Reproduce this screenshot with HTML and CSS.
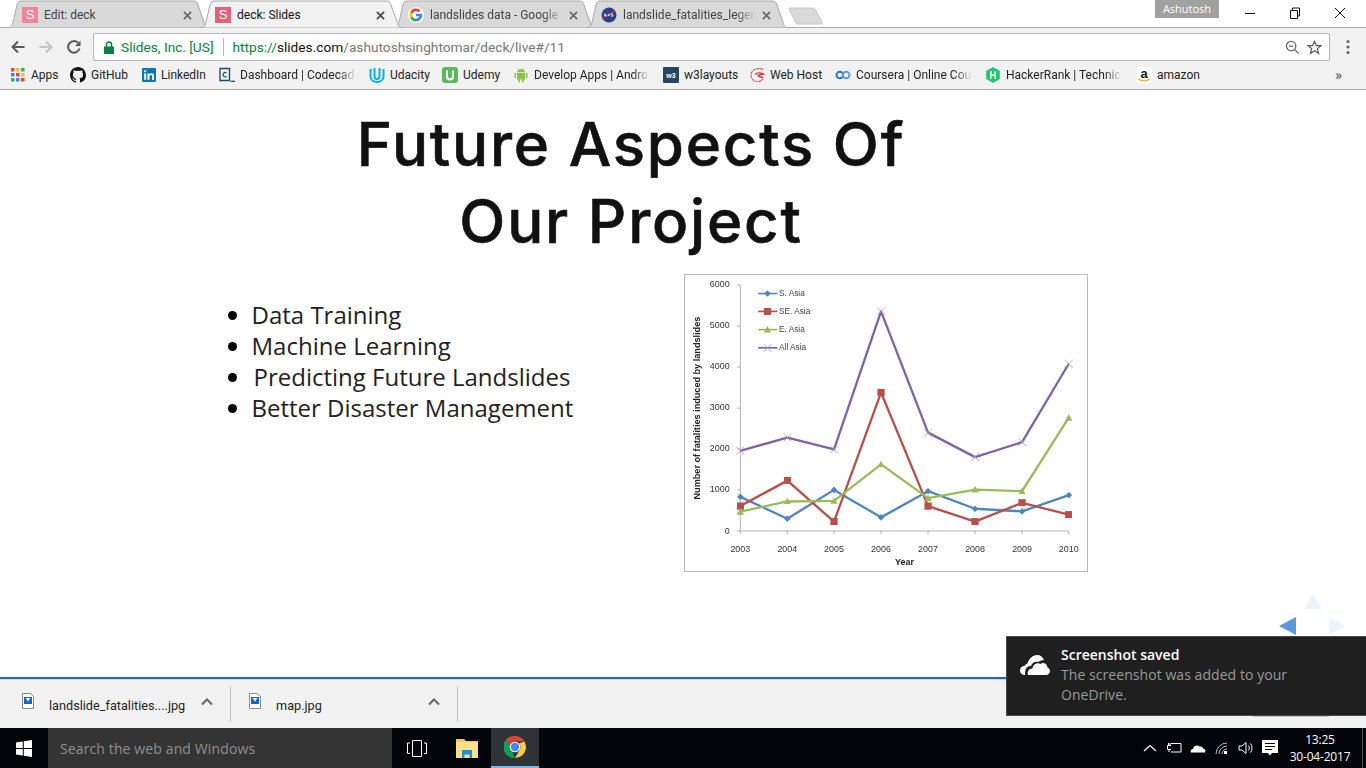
FILE: index.html
```html
<!DOCTYPE html>
<html lang="en">
<head>
<meta charset="utf-8">
<title>deck: Slides</title>
<link rel="stylesheet" href="styles.css">
</head>
<body>
<div class="browser">
  <header class="tabstrip">
    <div class="tab">
      <svg class="tab-shape" viewBox="0 0 203 28" preserveAspectRatio="none"><path d="M0 28C4 28 5 26 6 22L10 5C11 2 12 1 15 1H186C189 1 190 2 191 5L197 22C198 26 199 28 203 28Z"/></svg>
      <span class="fav fav-s fav-s-dim">S</span><span class="tab-title">Edit: deck</span>
      <svg class="tab-x" viewBox="0 0 10 10"><path d="M1 1L9 9M9 1L1 9"/></svg>
    </div>
    <div class="tab tab-active">
      <svg class="tab-shape" viewBox="0 0 203 28" preserveAspectRatio="none"><path d="M0 28C4 28 5 26 6 22L10 5C11 2 12 1 15 1H186C189 1 190 2 191 5L197 22C198 26 199 28 203 28Z"/></svg>
      <span class="fav fav-s">S</span><span class="tab-title">deck: Slides</span>
      <svg class="tab-x" viewBox="0 0 10 10"><path d="M1 1L9 9M9 1L1 9"/></svg>
    </div>
    <div class="tab">
      <svg class="tab-shape" viewBox="0 0 203 28" preserveAspectRatio="none"><path d="M0 28C4 28 5 26 6 22L10 5C11 2 12 1 15 1H186C189 1 190 2 191 5L197 22C198 26 199 28 203 28Z"/></svg>
      <svg class="fav" viewBox="0 0 16 16"><circle cx="8" cy="8" r="8" fill="#fff"/><path d="M13.8 6.7H8v2.6h3.4A3.6 3.6 0 0 1 8 11.8V14.4A6.3 6.3 0 0 0 14.300 8C14.300 7.500 14 7.100 13.800 6.700Z" fill="#4285f4"/><path d="M8 11.800A3.800 3.800 0 0 1 4.400 9.300L2.200 11A6.400 6.400 0 0 0 8 14.400Z" fill="#34a853"/><path d="M4.400 9.300A3.800 3.800 0 0 1 4.400 6.700L2.200 5A6.400 6.400 0 0 0 2.200 11Z" fill="#fbbc05"/><path d="M4.400 6.700A3.800 3.800 0 0 1 10.500 5.200L12.400 3.400A6.400 6.400 0 0 0 2.200 5Z" fill="#ea4335"/></svg>
      <span class="tab-title tab-fade">landslides data - Google</span>
      <svg class="tab-x" viewBox="0 0 10 10"><path d="M1 1L9 9M9 1L1 9"/></svg>
    </div>
    <div class="tab">
      <svg class="tab-shape" viewBox="0 0 203 28" preserveAspectRatio="none"><path d="M0 28C4 28 5 26 6 22L10 5C11 2 12 1 15 1H186C189 1 190 2 191 5L197 22C198 26 199 28 203 28Z"/></svg>
      <svg class="fav" viewBox="0 0 16 16"><circle cx="8" cy="8" r="7.500" fill="#2b3f8c"/><path d="M1.500 11C6 9.500 10 7 14 3.500" stroke="#d33" stroke-width="1.200" fill="none"/><path d="M3.500 9.200V6.800L5 9.200V6.800M7 9.200L8 6.800 9 9.200M10.200 9.200H12V8H10.500V6.800H12" stroke="#fff" stroke-width=".7" fill="none"/></svg>
      <span class="tab-title tab-fade">landslide_fatalities_legen</span>
      <svg class="tab-x" viewBox="0 0 10 10"><path d="M1 1L9 9M9 1L1 9"/></svg>
    </div>
    <svg class="newtab" viewBox="0 0 34 18"><path d="M1 1H24C25 1 26 2 26.500 3L33 15C33.500 16 33 17 32 17H9C8 17 7.500 16.500 7 15.500L.5 3C0 2 0 1 1 1Z"/></svg>
    <div class="profile">Ashutosh</div>
    <div class="winbtns">
      <svg class="winbtn" viewBox="0 0 12 12"><path d="M1 6.500H11"/></svg>
      <svg class="winbtn" viewBox="0 0 12 12"><path d="M1.500 3.500H8.500V11.500H1.500ZM3.500 3.500V1H10.500V9H8.500"/></svg>
      <svg class="winbtn" viewBox="0 0 12 12"><path d="M1 1L11 11M11 1L1 11"/></svg>
    </div>
  </header>

  <nav class="toolbar">
    <svg class="nav-ic" viewBox="0 0 16 16"><path class="ic-dark" d="M14.500 8H2.500M8 2.500L2.500 8 8 13.500"/></svg>
    <svg class="nav-ic" viewBox="0 0 16 16"><path class="ic-light" d="M1.500 8H13.500M8 2.500L13.500 8 8 13.500"/></svg>
    <svg class="nav-ic" viewBox="0 0 16 16"><path class="ic-dark" d="M13.500 9.500A5.800 5.800 0 1 1 12 3.800"/><path class="ic-fill" d="M14.500 1.500V7H9Z"/></svg>
    <div class="omnibox">
      <svg class="lock" viewBox="0 0 10 13"><path d="M0 5.500H10V13H0Z" fill="#0b8043"/><path d="M2.500 6V3.500A2.500 2.500 0 0 1 7.500 3.500V6" fill="none" stroke="#0b8043" stroke-width="1.500"/></svg>
      <span class="ev">Slides, Inc. [US]</span>
      <span class="omni-sep"></span>
      <span class="url"><span class="url-scheme">https://</span><span class="url-host">slides.com</span>/ashutoshsinghtomar/deck/live#/11</span>
      <svg class="omni-ic" viewBox="0 0 16 16"><circle cx="6.500" cy="6.500" r="5" fill="none" stroke="#666" stroke-width="1.400"/><path d="M4.200 6.500H8.800M10.200 10.200L14.500 14.500" stroke="#666" stroke-width="1.400" fill="none"/></svg>
      <svg class="omni-ic" viewBox="0 0 16 16"><path d="M8 1.500L10 6H14.800L11 9.200 12.300 14.300 8 11.500 3.700 14.300 5 9.200 1.200 6H6Z" fill="none" stroke="#555" stroke-width="1.300"/></svg>
    </div>
    <svg class="menu-ic" viewBox="0 0 4 16"><circle cx="2" cy="2.500" r="1.600"/><circle cx="2" cy="8" r="1.600"/><circle cx="2" cy="13.500" r="1.600"/></svg>
  </nav>

  <nav class="bookmarks">
    <a class="bm bm-apps"><svg class="bm-ic bm-ic-apps" viewBox="0 0 14 14"><rect width="3.500" height="3.500" fill="#e8453c"/><rect x="5" width="3.500" height="3.500" fill="#f9bb2d"/><rect x="10" width="3.500" height="3.500" fill="#3bab5a"/><rect y="5" width="3.500" height="3.500" fill="#4285f4"/><rect x="5" y="5" width="3.500" height="3.500" fill="#e8453c"/><rect x="10" y="5" width="3.500" height="3.500" fill="#f9bb2d"/><rect y="10" width="3.500" height="3.500" fill="#3bab5a"/><rect x="5" y="10" width="3.500" height="3.500" fill="#4285f4"/><rect x="10" y="10" width="3.500" height="3.500" fill="#e8453c"/></svg><span>Apps</span></a>
    <a class="bm bm-github"><svg class="bm-ic" viewBox="0 0 16 16"><path fill="#111" d="M8 0C3.600 0 0 3.600 0 8c0 3.500 2.300 6.500 5.500 7.600.4.100.5-.2.500-.4v-1.400c-2.200.5-2.700-1-2.700-1-.4-.9-.9-1.200-.9-1.200-.7-.5.100-.5.100-.5.800.1 1.200.8 1.200.8.700 1.200 1.900.9 2.300.7.100-.5.300-.9.500-1.100-1.800-.2-3.600-.9-3.600-4 0-.9.300-1.600.8-2.100-.1-.2-.4-1 .1-2.100 0 0 .7-.2 2.200.8.600-.2 1.300-.3 2-.3s1.400.1 2 .3c1.500-1 2.200-.8 2.200-.8.400 1.100.2 1.900.1 2.100.5.600.8 1.300.8 2.100 0 3.100-1.900 3.700-3.700 3.900.3.300.6.800.6 1.500v2.200c0 .2.100.5.600.4A8 8 0 0 0 16 8c0-4.400-3.600-8-8-8Z"/></svg><span>GitHub</span></a>
    <a class="bm bm-linkedin"><svg class="bm-ic bm-ic-14" viewBox="0 0 14 14"><rect width="14" height="14" rx="1" fill="#0b78b5"/><path d="M2.200 5.500H4.200V11.800H2.200ZM2.200 2.300H4.200V4.300H2.200ZM5.500 5.500H7.400V6.500C8 5.600 8.800 5.300 9.600 5.300 11.200 5.300 12 6.300 12 8V11.800H10V8.400C10 7.500 9.700 7 9 7 8.100 7 7.500 7.600 7.500 8.600V11.800H5.500Z" fill="#fff"/></svg><span>LinkedIn</span></a>
    <a class="bm bm-trunc"><svg class="bm-ic" viewBox="0 0 16 16"><path d="M1 1.500H10.500V13.500H1Z" fill="#eef1f4" stroke="#204b6b" stroke-width="1.400"/><path d="M7.500 5.800A2.200 2.200 0 1 0 7.500 9.500" fill="none" stroke="#204b6b" stroke-width="1.200"/><path d="M11.500 14.300H16" stroke="#204b6b" stroke-width="1.300"/></svg><span class="fade">Dashboard | Codecad</span></a>
    <a class="bm bm-udacity"><svg class="bm-ic" viewBox="0 0 16 16"><path d="M1.500 2V9.500C1.500 13 4.500 15 8 15S14.500 13 14.500 9.500V2" fill="none" stroke="#02b3e4" stroke-width="2"/><path d="M5.500 1V9.500C5.500 11.500 6.500 12 8 12S10.500 11.500 10.500 9.500V1" fill="none" stroke="#02b3e4" stroke-width="2"/></svg><span>Udacity</span></a>
    <a class="bm bm-udemy"><svg class="bm-ic" viewBox="0 0 16 16"><rect width="16" height="16" rx="3" fill="#5cb85c"/><path d="M5 3.500V9.500C5 11.500 6 12.500 8 12.500S11 11.500 11 9.500V3.500" fill="none" stroke="#fff" stroke-width="2"/></svg><span>Udemy</span></a>
    <a class="bm bm-trunc"><svg class="bm-ic" viewBox="0 0 16 16"><path fill="#8bc34a" d="M4 6H12V12.500H10.500V15.500H9V12.500H7V15.500H5.500V12.500H4ZM1.500 6H3V11H1.500ZM13 6H14.500V11H13ZM4 5.300C4 3.500 5.800 2 8 2S12 3.500 12 5.300Z"/><path d="M5.500 2.500L4.500.8M10.500 2.500L11.500.8" stroke="#8bc34a" stroke-width=".7"/></svg><span class="fade">Develop Apps | Andro</span></a>
    <a class="bm bm-w3"><svg class="bm-ic" viewBox="0 0 16 16"><rect width="16" height="16" rx="1" fill="#2a4560"/><text x="8" y="11" class="w3-text">w3</text></svg><span>w3layouts</span></a>
    <a class="bm bm-webhost"><svg class="bm-ic" viewBox="0 0 16 16"><path d="M14 2.500C10 .5 4 1.500 2.500 6S3.500 14 7.500 14.500C10.500 15 13 13.500 14 11.500" fill="none" stroke="#e3554f" stroke-width="1.200" stroke-dasharray="3 .8"/><path d="M6 7.500C8 5.500 11 5.500 14.500 7L9 8.500C10 10 12 10.500 14 10" fill="none" stroke="#d82c25" stroke-width="1.300"/></svg><span>Web Host</span></a>
    <a class="bm bm-trunc"><svg class="bm-ic" viewBox="0 0 16 16"><circle cx="4.800" cy="8" r="3.300" fill="none" stroke="#2a73cc" stroke-width="2"/><circle cx="11.200" cy="8" r="3.300" fill="none" stroke="#5e9be0" stroke-width="2"/></svg><span class="fade">Coursera | Online Cou</span></a>
    <a class="bm bm-trunc bm-hacker"><svg class="bm-ic" viewBox="0 0 16 16"><path d="M8 0L14.800 4V12L8 16 1.200 12V4Z" fill="#1ec96c"/><path d="M5.800 4V12M10.200 4V12M5.800 8H10.200" stroke="#fff" stroke-width="1.500"/></svg><span class="fade">HackerRank | Technica</span></a>
    <a class="bm bm-amazon"><svg class="bm-ic" viewBox="0 0 16 16"><rect width="16" height="16" fill="#fff"/><text x="8" y="11" class="amz-text">a</text><path d="M2.500 12C6 14.500 10.500 14.500 13.500 12" stroke="#f90" stroke-width="1.200" fill="none"/></svg><span>amazon</span></a>
    <span class="bm-more">»</span>
  </nav>

  <main class="slide">
    <h1 class="slide-title">Future Aspects Of<br>Our Project</h1>
    <div class="slide-body">
      <ul class="points">
        <li>Data Training</li>
        <li>Machine Learning</li>
        <li class="point-indent">Predicting Future Landslides</li>
        <li>Better Disaster Management</li>
      </ul>
      <figure class="chart-frame">
        <svg class="chart" viewBox="12 12 1212 894">
          <defs>
            <marker id="m-d" markerUnits="userSpaceOnUse" markerWidth="20" markerHeight="20" refX="10" refY="10"><path d="M10 0L20 10 10 20 0 10Z" fill="#4f87bd"/></marker>
            <marker id="m-s" markerUnits="userSpaceOnUse" markerWidth="22" markerHeight="22" refX="11" refY="11"><rect width="22" height="22" fill="#b94f4b"/></marker>
            <marker id="m-t" markerUnits="userSpaceOnUse" markerWidth="22" markerHeight="20" refX="11" refY="11"><path d="M11 0L22 20H0Z" fill="#9bbb59"/></marker>
            <marker id="m-x" markerUnits="userSpaceOnUse" markerWidth="30" markerHeight="30" refX="15" refY="15"><path d="M3 3L27 27M27 3L3 27" stroke="#a99bbd" stroke-width="2.500"/></marker>
          </defs>
          <path class="axis" d="M178 42V785H1170M168 42H178M168 166H178M168 290H178M168 414H178M168 537H178M168 661H178M168 785H178M178 785V795M320 785V795M461 785V795M603 785V795M745 785V795M887 785V795M1029 785V795M1170 785V795"/>
          <polyline class="s s-blue" points="178,682 320,748 461,661 603,744 745,665 887,718 1029,726 1170,677"/>
          <polyline class="s s-red" points="178,710 320,633 461,757 603,367 745,710 887,757 1029,700 1170,736"/>
          <polyline class="s s-green" points="178,727 320,696 461,694 603,584 745,686 887,660 1029,665 1170,443"/>
          <polyline class="s s-purple" points="178,543 320,503 461,539 603,122 745,488 887,562 1029,517 1170,280"/>
          <polyline class="s s-blue leg" points="232,68 260,68 290,68"/>
          <polyline class="s s-red leg" points="232,122 260,122 290,122"/>
          <polyline class="s s-green leg" points="232,177 260,177 290,177"/>
          <polyline class="s s-purple leg" points="232,232 260,232 290,232"/>
          <g class="lbl lbl-leg">
            <text x="295" y="75">S. Asia</text><text x="295" y="129">SE. Asia</text><text x="295" y="184">E. Asia</text><text x="295" y="239">All Asia</text>
          </g>
          <g class="lbl lbl-end">
            <text x="146" y="49">6000</text><text x="146" y="173">5000</text><text x="146" y="297">4000</text><text x="146" y="421">3000</text><text x="146" y="545">2000</text><text x="146" y="668">1000</text><text x="146" y="793">0</text>
          </g>
          <g class="lbl lbl-mid">
            <text x="178" y="848">2003</text><text x="320" y="848">2004</text><text x="461" y="848">2005</text><text x="603" y="848">2006</text><text x="745" y="848">2007</text><text x="887" y="848">2008</text><text x="1029" y="848">2009</text><text x="1170" y="848">2010</text>
          </g>
          <text class="axis-title" x="674" y="889">Year</text>
          <text class="axis-title" transform="translate(55 414) rotate(-90)" textLength="552" lengthAdjust="spacingAndGlyphs">Number of fatalities induced by landslides</text>
        </svg>
      </figure>
    </div>
  </main>

  <section class="downloads">
    <div class="dl dl-first">
      <svg class="dl-file" viewBox="0 0 12 16"><path d="M.5.500H8.500L11.500 3.500V15.500H.5Z" fill="#fff" stroke="#8a8a8a"/><rect x="2" y="4" width="8" height="7" fill="#1668c4"/><path d="M3.500 5L6 8.500 8.500 5Z" fill="#fff"/></svg>
      <span class="dl-name">landslide_fatalities....jpg</span>
      <svg class="dl-chev" viewBox="0 0 12 8"><path d="M1 6.500L6 1.500 11 6.500"/></svg>
    </div>
    <div class="dl dl-second">
      <svg class="dl-file" viewBox="0 0 12 16"><path d="M.5.500H8.500L11.500 3.500V15.500H.5Z" fill="#fff" stroke="#8a8a8a"/><rect x="2" y="4" width="8" height="7" fill="#1668c4"/><path d="M3.500 5L6 8.500 8.500 5Z" fill="#fff"/></svg>
      <span class="dl-name">map.jpg</span>
      <svg class="dl-chev" viewBox="0 0 12 8"><path d="M1 6.500L6 1.500 11 6.500"/></svg>
    </div>
  </section>

  <footer class="taskbar">
    <div class="start"><svg class="winlogo" viewBox="0 0 16 17"><path d="M0 2.500L6.800 1.500V8H0ZM7.800 1.300L16 0V8H7.800ZM0 9H6.800V15.500L0 14.500ZM7.800 9H16V17L7.800 15.700Z" fill="#fff"/></svg></div>
    <div class="search">Search the web and Windows</div>
    <div class="task task-view"><svg class="tv" viewBox="0 0 20 17"><path d="M5.500 .5H14.500V16.500H5.500ZM3 3H.5V13.500H3M17 3H19.500V13.500H17" fill="none" stroke="#fff"/></svg></div>
    <div class="task task-files"><svg class="tf" viewBox="0 0 22 20"><path d="M0 1H8L10 3H22V20H0Z" fill="#f0c95c"/><path d="M0 4H22V20H0Z" fill="#fbe08a"/><path d="M6 14H16V20H13.500V16.500H8.500V20H6Z" fill="#1a8fe0"/><path d="M6 12H16V14H6Z" fill="#1a8fe0"/></svg></div>
    <div class="task task-chrome"><svg class="tc" viewBox="0 0 22 22"><path d="M11 0A11 11 0 0 1 20.500 5.500H11A5.500 5.500 0 0 0 5.800 9.200L2 3.800A11 11 0 0 1 11 0Z" fill="#db4437"/><path d="M2 3.800L5.800 9.200 8.300 15.800 11 22A11 11 0 0 1 2 3.800Z" fill="#0f9d58"/><path d="M20.500 5.500A11 11 0 0 1 11 22L15.800 13.800A5.500 5.500 0 0 0 15 7.500Z" fill="#ffcd40"/><circle cx="11" cy="11" r="5.300" fill="#fff"/><circle cx="11" cy="11" r="4.200" fill="#4285f4"/></svg></div>
    <div class="tray">
      <svg class="tray-ic" viewBox="0 0 16 16"><path d="M2 11L8 5.500 14 11" fill="none" stroke="#fff" stroke-width="1.200"/></svg>
      <svg class="tray-ic" viewBox="0 0 16 16"><path d="M5 3.500H15V12H5M5 5.500H1.500V9.500H5M2.500 5.500V3M4 5.500V3M3 9.500V12" fill="none" stroke="#fff"/></svg>
      <svg class="tray-ic" viewBox="0 0 16 16"><path d="M1 12.500C0 10.500 1.500 9 3 9 3.500 6 7 4.500 9.500 6.500 12 6 13 7.500 13 8.500 15 8.800 16 10.500 15 12.500Z" fill="#fff"/></svg>
      <svg class="tray-ic" viewBox="0 0 16 16"><path d="M2 14A11 11 0 0 1 13 3M5 14A8 8 0 0 1 13 6M8 14A5 5 0 0 1 13 9" fill="none" stroke="#bbb"/><rect x="10" y="11" width="3" height="3" fill="#fff"/></svg>
      <svg class="tray-ic" viewBox="0 0 16 16"><path d="M1 6H4L8 2.500V13.500L4 10H1ZM10.500 5.500C11.500 7 11.500 9 10.500 10.500M12.500 3.500C14.500 6 14.500 10 12.500 12.500" fill="none" stroke="#fff"/></svg>
      <svg class="tray-ic" viewBox="0 0 16 16"><path d="M0 0H16V13H10L8 15.500 6 13H0Z" fill="#fff"/><path d="M3 3.500H13M3 6.500H13M3 9.500H10" stroke="#000"/></svg>
      <div class="clock"><span>13:25</span><span>30-04-2017</span></div>
      <span class="showdesk"></span>
    </div>
  </footer>
</div>

<div class="slide-nav" aria-hidden="true">
  <span class="arrow arrow-up"></span>
  <span class="arrow arrow-left"></span>
  <span class="arrow arrow-right"></span>
</div>
<span class="showall"></span>
<aside class="toast">
  <svg class="toast-ic" viewBox="0 0 30 20"><path d="M5 20C1.500 20 0 17.500 0 15.500 0 13 2 11 4.500 11 5 10 6 9 7.500 8.500 9 3.500 13 0 17 0 20.500 0 23 2 24 5 21 5 19.500 6 18.500 7 16 6 12 7 11 11 8 10.800 6 13 5.500 15 5 17 5 19 5 20ZM8 20C7 17 8.500 13.500 12.500 13.500 13 9.500 17 7 20.500 9 22.500 7 27 8 27.500 12.500 29 13 30 14.500 30 16 30 18 28.500 20 26 20Z" fill="#fff"/></svg>
  <div class="toast-text">
    <div class="toast-title">Screenshot saved</div>
    <div class="toast-body">The screenshot was added to your OneDrive.</div>
  </div>
</aside>
</body>
</html>
```

FILE: styles.css
```css
* { box-sizing: border-box; }
html, body { margin: 0; padding: 0; height: 100%; overflow: hidden; }
body { font-family: "Open Sans", "Liberation Sans", sans-serif; background: #fff; position: relative; }
h1, ul, figure { margin: 0; padding: 0; }
.browser { display: flex; flex-direction: column; width: 1366px; height: 768px; }

/* Tab strip */
.tabstrip { display: flex; align-items: flex-start; flex: none; height: 28px; padding-left: 7px; border-bottom: 1px solid #ababab; background: #fff; font-family: Roboto, "Liberation Sans", sans-serif; }
.tab { position: relative; flex: none; display: flex; align-items: center; gap: 6px; width: 203px; height: 28px; margin-right: -10px; padding: 2px 18px 0 15px; font-size: 12px; color: #444; }
.tab-shape { position: absolute; inset: 0; width: 100%; height: 100%; }
.tab-shape path { fill: #d9d9d9; stroke: #a9a9a9; stroke-width: 1; }
.tab-active { z-index: 2; color: #111; }
.tab-active .tab-shape path { fill: #f2f2f2; }
.fav { position: relative; flex: none; width: 16px; height: 16px; }
.fav-s { display: flex; align-items: center; justify-content: center; background: #e5607a; color: #fff; font: 13px/16px "Liberation Sans", sans-serif; }
.fav-s-dim { background: #ee8599; }
.tab-title { position: relative; flex: 1; min-width: 0; white-space: nowrap; overflow: hidden; }
.tab-fade { -webkit-mask-image: linear-gradient(90deg, #000 85%, transparent); mask-image: linear-gradient(90deg, #000 85%, transparent); }
.tab-x { position: relative; flex: none; width: 9px; height: 9px; fill: none; stroke: #666; stroke-width: 1.8; }
.tab-active .tab-x { stroke: #444; }
.newtab { flex: none; width: 34px; height: 18px; margin: 7px 0 0 10px; }
.newtab path { fill: #d9d9d9; stroke: #c6c6c6; }
.profile { flex: none; width: 64px; height: 18px; margin-left: 332px; background: #a1a1a1; color: #fff; font: 11px/17px "Open Sans", sans-serif; text-align: center; }
.winbtns { flex: none; display: flex; gap: 33px; margin: 7px 0 0 25px; }
.winbtn { width: 12px; height: 12px; fill: none; stroke: #111; stroke-width: 1; }

/* Toolbar */
.toolbar { display: flex; align-items: center; flex: none; height: 33px; padding: 5px 0 0 10px; background: #f2f2f2; }
.nav-ic { flex: none; width: 16px; height: 16px; margin-right: 12px; }
.ic-dark { fill: none; stroke: #5a5a5a; stroke-width: 2; }
.ic-light { fill: none; stroke: #c4c4c4; stroke-width: 2; }
.ic-fill { fill: #5a5a5a; }
.omnibox { flex: none; display: flex; align-items: center; width: 1237px; height: 28px; margin: 0 0 0 -1px; padding: 0 7px 0 10px; background: #fff; border: 1px solid #b5b5b5; border-radius: 2px; font: 13.7px Roboto, "Liberation Sans", sans-serif; color: #777; }
.lock { flex: none; width: 10px; height: 13px; margin-right: 7px; }
.ev { color: #0b8043; white-space: nowrap; }
.omni-sep { flex: none; width: 1px; height: 18px; margin: 0 9px; background: #bbb; }
.url { flex: 1; white-space: nowrap; }
.url-scheme { color: #0b8043; }
.url-host { color: #111; }
.omni-ic { flex: none; width: 15px; height: 15px; margin-left: 7px; }
.menu-ic { flex: none; width: 4px; height: 16px; margin-left: 16px; fill: #666; }

/* Bookmarks */
.bookmarks { display: flex; align-items: center; flex: none; height: 29px; padding: 0 0 1px 11px; background: #f2f2f2; border-bottom: 1px solid #a9a9a9; font: 12px Roboto, "Liberation Sans", sans-serif; color: #222; }
.bm { flex: none; display: flex; align-items: center; gap: 5px; white-space: nowrap; }
.bm span { flex: 1; min-width: 0; }
.bm-ic { flex: none; width: 16px; height: 16px; }
.bm-ic-apps, .bm-ic-14 { width: 14px; height: 14px; }
.bm-ic-apps { margin-right: 1px; }
.fade { -webkit-mask-image: linear-gradient(90deg, #000 85%, transparent); mask-image: linear-gradient(90deg, #000 85%, transparent); }
.bm-apps { width: 59px; }
.bm-github { width: 72px; }
.bm-linkedin { width: 77px; }
.bm-trunc { width: 137px; margin-right: 13px; }
.bm-udacity { width: 73px; }
.bm-udemy { width: 71px; }
.bm-w3 { width: 86px; }
.bm-webhost { width: 86px; }
.bm-hacker { margin-right: 14px; }
.bm-amazon { width: 199px; }
.bm-more { flex: none; font-size: 15px; color: #555; line-height: 14px; }
.w3-text { font: bold 7px "Liberation Sans", sans-serif; fill: #fff; text-anchor: middle; }
.amz-text { font: bold 13px "Liberation Sans", sans-serif; fill: #111; text-anchor: middle; }

/* Slide */
.slide { flex: 1; min-height: 0; display: flex; flex-direction: column; background: #fff; }
.slide-title { flex: none; width: 1262px; padding-top: 16px; font: 500 60px/77px Inter, "Liberation Sans", sans-serif; letter-spacing: 1.8px; -webkit-text-stroke: .6px #111; color: #111; text-align: center; }
.slide-body { display: flex; align-items: flex-start; padding: 14px 0 0 233px; }
.points { flex: none; width: 451px; margin-top: 25px; padding-left: 18.5px; font: 24px/31px "Open Sans", sans-serif; color: #222; list-style: disc; }
.points li::marker { color: #000; font-size: 24px; }
.point-indent { text-indent: 2px; }
.chart-frame { flex: none; width: 404px; height: 298px; border: 1px solid #b9b9b9; background: #fff; }
.chart { display: block; width: 100%; height: 100%; filter: blur(.35px); }
.axis { fill: none; stroke: #8c8c8c; stroke-width: 2; }
.s { fill: none; stroke-width: 7; stroke-linejoin: round; }
.s-blue { stroke: #4f87bd; marker: url(#m-d); }
.s-red { stroke: #b94f4b; marker: url(#m-s); }
.s-green { stroke: #9bbb59; marker: url(#m-t); }
.s-purple { stroke: #7f63a2; marker: url(#m-x); }
.leg { marker-start: none; marker-end: none; stroke-width: 5; }
.lbl { font: 27px "Liberation Sans", sans-serif; fill: #333; }
.lbl-leg { font-size: 25px; fill: #444; }
.lbl-end { text-anchor: end; }
.lbl-mid { text-anchor: middle; }
.axis-title { font: bold 27px "Liberation Sans", sans-serif; fill: #222; text-anchor: middle; }

/* Downloads */
.downloads { display: flex; flex: none; height: 51px; background: #f2f2f2; border-top: 2px solid #1a6ac6; box-shadow: inset 0 1px 0 #d4d4d4; font: 12.7px Roboto, "Liberation Sans", sans-serif; color: #222; padding: 7px 0 6px; }
.dl { flex: none; display: flex; align-items: center; height: 36px; border-right: 1px solid #c4c4c4; padding-left: 22px; }
.dl-first { width: 231px; }
.dl-second { width: 227px; padding-left: 18px; }
.dl-file { flex: none; width: 12px; height: 16px; margin: -7px 15px 0 0; }
.dl-name { flex: 1; white-space: nowrap; margin-top: 2px; }
.dl-chev { flex: none; width: 12px; height: 8px; margin: -5px 17px 0 0; fill: none; stroke: #666; stroke-width: 2; }

/* Taskbar */
.taskbar { display: flex; align-items: center; flex: none; height: 40px; background: #02040a; color: #fff; }
.start { flex: none; display: flex; align-items: center; justify-content: center; width: 48px; height: 40px; }
.winlogo { width: 16px; height: 17px; }
.search { flex: none; width: 344px; height: 40px; padding-left: 12px; background: #343434; color: #8f8f8f; font: 14px/41px "Open Sans", sans-serif; letter-spacing: .12px; }
.task { flex: none; display: flex; align-items: center; justify-content: center; height: 40px; width: 48px; }
.task-view { width: 50px; }
.task-files { width: 49px; }
.tv { width: 20px; height: 17px; }
.tf { width: 22px; height: 20px; }
.tc { width: 22px; height: 22px; }
.task-chrome { background: #2f3338; border-bottom: 2px solid #76b9ed; }
.tray { flex: 1; display: flex; align-items: center; justify-content: flex-end; height: 40px; }
.tray-ic { flex: none; width: 16px; height: 16px; margin-right: 8px; }
.clock { flex: none; display: flex; flex-direction: column; align-items: center; width: 76px; margin-left: -4px; font: 12px/17px "Open Sans", sans-serif; letter-spacing: -.2px; }
.showdesk { flex: none; width: 1px; height: 40px; margin: 0 3px 0 4px; background: #555; }

/* Overlays */
.slide-nav { position: absolute; left: 1279px; top: 592px; width: 66px; height: 44px; }
.arrow { position: absolute; width: 0; height: 0; border-style: solid; border-color: transparent; }
.arrow-up { left: 25px; top: 1px; border-width: 0 9px 16px; border-bottom-color: #edf3fb; }
.arrow-left { left: 0; top: 25px; border-width: 9px 17px 9px 0; border-right-color: #5a9ad9; }
.arrow-right { left: 50px; top: 25px; border-width: 9px 0 9px 16px; border-left-color: #edf3fb; }
.showall { position: absolute; left: 1253px; top: 716px; width: 76px; height: 1px; background: #c2c2c2; }
.toast { position: absolute; left: 1006px; top: 636px; display: flex; width: 360px; height: 80px; padding: 8px 0 0 13px; gap: 11px; background: #1f1f1f; border: 1px solid #4a4a4a; border-right: 0; font: 14px/20px "Open Sans", sans-serif; }
.toast-ic { flex: none; width: 30px; height: 20px; margin-top: 10px; }
.toast-text { width: 250px; }
.toast-title { color: #fff; font-weight: 600; }
.toast-body { color: #9a9a9a; letter-spacing: .06px; }
```
